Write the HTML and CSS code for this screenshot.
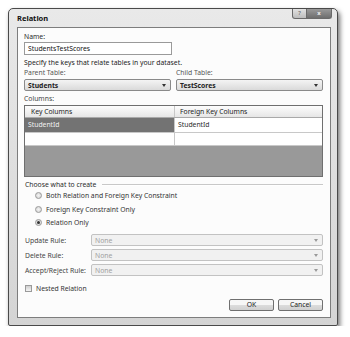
FILE: index.html
```html
<!DOCTYPE html>
<html lang="en">
<head>
    <meta charset="UTF-8">
    <title>Relation</title>
    <link rel="stylesheet" href="styles.css">
</head>
<body>
    <div class="window">
        <div class="titlebar">
            <span class="title">Relation</span>
            <div class="caption-buttons">
                <span class="cap-btn help">?</span>
                <span class="cap-btn close">x</span>
            </div>
        </div>
        <div class="client">
            <div class="label">Name:</div>
            <div class="textbox">StudentsTestScores</div>
            <div class="label hint">Specify the keys that relate tables in your dataset.</div>

            <div class="pick-row">
                <div class="pick">
                    <div class="label">Parent Table:</div>
                    <div class="combo"><span>Students</span><span class="arrow"></span></div>
                </div>
                <div class="pick">
                    <div class="label">Child Table:</div>
                    <div class="combo"><span>TestScores</span><span class="arrow"></span></div>
                </div>
            </div>

            <div class="label columns-label">Columns:</div>
            <div class="grid">
                <div class="grid-row grid-head">
                    <div class="cell">Key Columns</div>
                    <div class="cell">Foreign Key Columns</div>
                </div>
                <div class="grid-row">
                    <div class="cell selected">StudentId</div>
                    <div class="cell">StudentId</div>
                </div>
                <div class="grid-row new-row">
                    <div class="cell"></div>
                    <div class="cell"></div>
                </div>
            </div>

            <div class="group-title">
                <span>Choose what to create</span>
                <span class="group-line"></span>
            </div>
            <div class="radios">
                <div class="radio-row"><span class="radio"></span>Both Relation and Foreign Key Constraint</div>
                <div class="radio-row"><span class="radio"></span>Foreign Key Constraint Only</div>
                <div class="radio-row"><span class="radio checked"></span>Relation Only</div>
            </div>

            <div class="rules">
                <div class="rule-row">
                    <span class="label">Update Rule:</span>
                    <div class="combo disabled"><span>None</span><span class="arrow"></span></div>
                </div>
                <div class="rule-row">
                    <span class="label">Delete Rule:</span>
                    <div class="combo disabled"><span>None</span><span class="arrow"></span></div>
                </div>
                <div class="rule-row">
                    <span class="label">Accept/Reject Rule:</span>
                    <div class="combo disabled"><span>None</span><span class="arrow"></span></div>
                </div>
            </div>

            <div class="check-row"><span class="checkbox"></span>Nested Relation</div>

            <div class="buttons">
                <span class="button">OK</span>
                <span class="button">Cancel</span>
            </div>
            <span class="grip"></span>
        </div>
    </div>
</body>
</html>
```

FILE: styles.css
```css
body {
    margin: 0;
    background-color: #fff;
    font-family: "Noto Sans", "Open Sans", sans-serif;
    font-size: 6.8px;
    color: #2a2a2a;
}
.window {
    width: 330px;
    height: 318px;
    margin: 8px 0 0 8px;
    box-sizing: border-box;
    border: 1px solid #4a4a4a;
    border-radius: 5px 5px 2px 2px;
    background: linear-gradient(#e9e9e9, #d4d4d4);
    box-shadow: 2px 3px 5px rgba(0, 0, 0, 0.55);
    padding: 0 6px 7px 8px;
    display: flex;
    flex-direction: column;
}
.titlebar {
    height: 18px;
    display: flex;
    justify-content: space-between;
    align-items: flex-start;
}
.title {
    font-weight: bold;
    font-size: 7.5px;
    line-height: 18px;
    color: #111;
}
.caption-buttons {
    display: flex;
    margin-right: -1px;
}
.cap-btn {
    height: 9px;
    border: 1px solid #6a6a6a;
    border-top: none;
    font-size: 6px;
    line-height: 9px;
    text-align: center;
}
.help {
    width: 13px;
    border-radius: 0 0 0 3px;
    background: linear-gradient(#e2e2e2, #bdbdbd);
    color: #555;
}
.close {
    width: 24px;
    border-left: none;
    border-radius: 0 0 3px 0;
    background: linear-gradient(#9a9a9a, #6e6e6e);
    color: #eee;
    font-weight: bold;
}
.client {
    flex: 1;
    position: relative;
    box-sizing: border-box;
    border: 1px solid #7d7d7d;
    background-color: #fcfcfc;
    padding: 4px 7px 0 6px;
    display: flex;
    flex-direction: column;
}
.label {
    line-height: 9px;
    white-space: nowrap;
}
.textbox {
    width: 148px;
    height: 13px;
    margin-top: 1px;
    box-sizing: border-box;
    border: 1px solid #9a9a9a;
    background-color: #fff;
    padding-left: 3px;
    line-height: 11px;
    color: #111;
}
.hint {
    margin-top: 3px;
    color: #222;
}
.pick-row {
    display: grid;
    grid-template-columns: 147px 147px;
    column-gap: 5px;
    margin-top: 1px;
}
.pick .label {
    color: #555;
}
.combo {
    height: 12px;
    margin-top: 2px;
    box-sizing: border-box;
    border: 1px solid #8a8a8a;
    border-radius: 2px;
    background: linear-gradient(#f4f4f4, #dadada);
    padding: 0 4px 0 3px;
    display: flex;
    justify-content: space-between;
    align-items: center;
    font-weight: bold;
    color: #222;
}
.arrow {
    width: 0;
    height: 0;
    border-left: 2px solid transparent;
    border-right: 2px solid transparent;
    border-top: 3px solid #333;
}
.columns-label {
    margin-top: 3px;
    color: #444;
}
.grid {
    height: 72px;
    margin-top: 2px;
    box-sizing: border-box;
    border: 1px solid #6f6f6f;
    background-color: #999;
}
.grid-row {
    display: grid;
    grid-template-columns: 150px 1fr;
    height: 14px;
    background-color: #fff;
    border-bottom: 1px solid #c8c8c8;
}
.grid-row .cell {
    padding-left: 3px;
    line-height: 14px;
}
.grid-row .cell:first-child {
    border-right: 1px solid #c8c8c8;
}
.grid-head {
    height: 11px;
    background: linear-gradient(#fdfdfd, #e6e6e6);
    border-bottom: 1px solid #a9a9a9;
}
.grid-head .cell {
    line-height: 11px;
    padding-left: 5px;
    color: #222;
}
.grid-head .cell:first-child {
    padding-left: 6px;
}
.cell.selected {
    background-color: #737373;
    color: #f2f2f2;
}
.new-row {
    height: 12px;
}
.group-title {
    margin-top: 3px;
    height: 9px;
    display: flex;
    align-items: center;
    gap: 6px;
    line-height: 9px;
    padding-left: 1px;
}
.group-line {
    flex: 1;
    height: 0;
    border-top: 1px solid #c8c8c8;
    border-bottom: 1px solid #fff;
}
.radios {
    padding-left: 11px;
}
.radio-row {
    display: flex;
    align-items: center;
    gap: 4px;
    height: 13px;
    white-space: nowrap;
    color: #333;
}
.radio-row:nth-child(2) {
    height: 14px;
}
.radio {
    width: 5px;
    height: 5px;
    border: 1px solid #9a9a9a;
    border-radius: 50%;
    background: radial-gradient(#f4f4f4, #cfcfcf);
    display: flex;
    align-items: center;
    justify-content: center;
}
.radio.checked::after {
    content: "";
    width: 3px;
    height: 3px;
    border-radius: 50%;
    background-color: #333;
}
.rules {
    margin-top: 5px;
    display: flex;
    flex-direction: column;
    gap: 3px;
}
.rule-row {
    display: grid;
    grid-template-columns: 67px 1fr;
    align-items: center;
}
.rule-row .label {
    padding-left: 1px;
    color: #444;
}
.combo.disabled {
    margin-top: 0;
    border-color: #c2c2c2;
    background: #f1f1f1;
    font-weight: normal;
    color: #a0a0a0;
}
.combo.disabled .arrow {
    border-top-color: #9a9a9a;
}
.check-row {
    margin-top: 6px;
    height: 12px;
    display: flex;
    align-items: center;
    gap: 4px;
    padding-left: 1px;
    color: #333;
}
.checkbox {
    width: 5px;
    height: 5px;
    border: 1px solid #9a9a9a;
    background: linear-gradient(#cfcfcf, #f4f4f4);
}
.buttons {
    margin-top: 5px;
    display: flex;
    justify-content: flex-end;
    gap: 4px;
}
.button {
    width: 45px;
    height: 12px;
    box-sizing: border-box;
    border: 1px solid #707070;
    border-radius: 2px;
    background: linear-gradient(#f6f6f6 50%, #dcdcdc 50%, #d0d0d0);
    text-align: center;
    line-height: 10px;
    color: #222;
}
.grip {
    position: absolute;
    right: 1px;
    bottom: 1px;
    width: 4px;
    height: 4px;
    background: radial-gradient(circle, #aaa 0.6px, transparent 0.7px) 0 0 / 2px 2px;
}
```
